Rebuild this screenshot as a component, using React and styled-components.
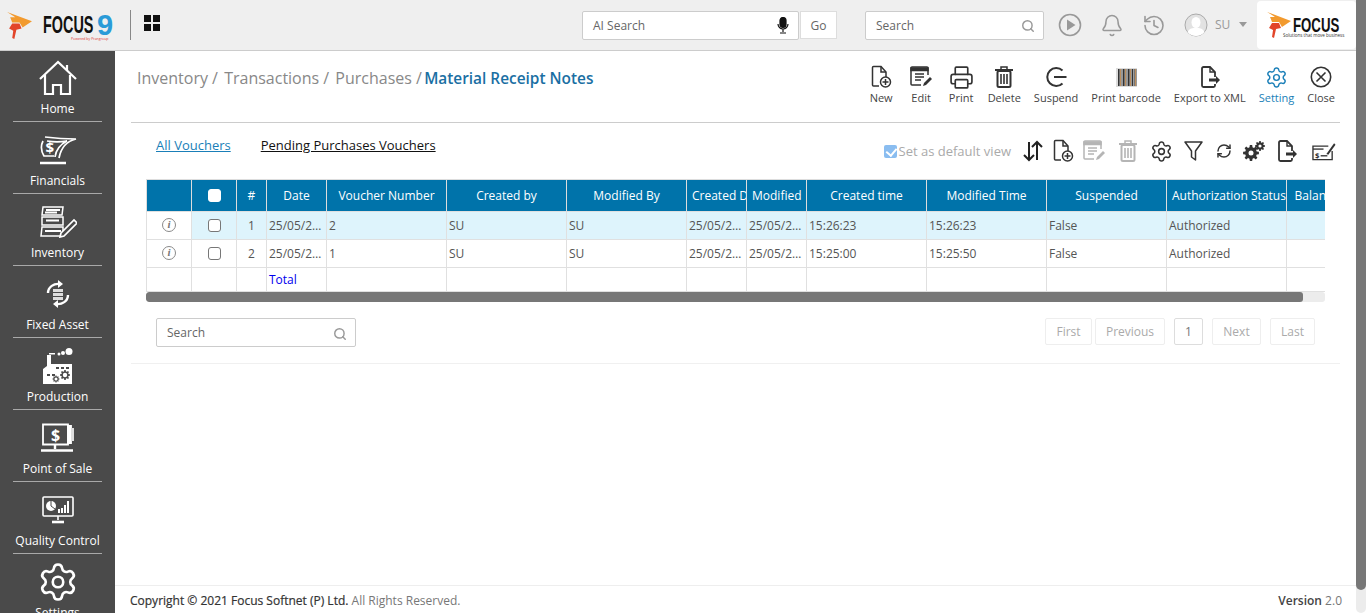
import React from 'react';
import styled, { createGlobalStyle } from 'styled-components';
import { Bell, History, Printer, RefreshCw, Search, Settings } from 'lucide-react';

const GlobalStyle = createGlobalStyle`
  html, body {
    margin: 0;
    height: 100%;
    overflow: hidden;
    background: #fff;
  }
  body {
    font-family: "Open Sans", "Liberation Sans", sans-serif;
    color: #555;
  }
  * {
    box-sizing: border-box;
  }
`;

const Page = styled.div`
  display: flex;
  width: 1366px;
  height: 613px;
  overflow: hidden;
`;

const Main = styled.div`
  display: flex;
  flex-direction: column;
  width: 1356px;
`;

const PageScroll = styled.div`
  width: 10px;
  background: #ececec;
  border-radius: 0 0 5px 5px;
  overflow: hidden;
`;

const PageThumb = styled.div`
  height: 590px;
  background: #777;
  border-radius: 0 0 5px 5px;
`;

/* top bar */

const TopBar = styled.header`
  display: flex;
  align-items: center;
  height: 51px;
  flex: none;
  background: #efefef;
  border-bottom: 1px solid #ccc;
`;

const BrandLogo = styled.div`
  position: relative;
  display: flex;
  align-items: center;
  width: 131px;
  height: 30px;
  padding-left: 7px;
  border-right: 1px solid #888;
`;

const LogoWord = styled.span`
  display: inline-block;
  width: ${p => p.$width}px;
  margin-left: ${p => p.$left}px;
  margin-top: ${p => p.$top || 0}px;
  font-family: "Liberation Sans", sans-serif;
  font-weight: 700;
  font-size: ${p => p.$size}px;
  line-height: 1;
  color: #111;
  transform: scaleX(${p => p.$scale});
  transform-origin: left center;
  white-space: nowrap;
`;

const LogoNine = styled.span`
  font-family: "Liberation Sans", sans-serif;
  font-weight: 700;
  font-size: 29px;
  line-height: 1;
  color: #2a9bd8;
  margin-left: 1px;
`;

const PoweredBy = styled.span`
  position: absolute;
  left: 71px;
  top: 26px;
  font-size: 3.5px;
  color: #d33;
  white-space: nowrap;
`;

const GridMark = styled.div`
  display: grid;
  grid-template-columns: 7px 7px;
  grid-template-rows: 7px 7px;
  gap: 2px;
  margin-left: 13px;
  margin-top: -5px;
  span {
    background: #111;
  }
`;

const TopSearchArea = styled.div`
  display: flex;
  align-items: center;
  margin-left: 422px;
`;

const AiBox = styled.div`
  display: flex;
  align-items: center;
  justify-content: space-between;
  width: 217px;
  height: 29px;
  padding: 0 9px 0 10px;
  background: #fff;
  border: 1px solid #ccc;
  border-radius: 2px;
  font-size: 12px;
  color: #666;
`;

const GoButton = styled.div`
  display: flex;
  align-items: center;
  justify-content: center;
  width: 37px;
  height: 28px;
  margin-left: 1px;
  background: #fff;
  border: 1px solid #ddd;
  font-size: 12px;
  color: #666;
`;

const SearchBox = styled.div`
  display: flex;
  align-items: center;
  justify-content: space-between;
  width: ${p => p.$width}px;
  height: 29px;
  margin-left: ${p => p.$left || 0}px;
  padding: 0 8px 0 10px;
  background: #fff;
  border: 1px solid #ccc;
  border-radius: 2px;
  font-size: 12px;
  color: #666;
  svg {
    color: #999;
    margin-top: 2px;
  }
`;

const TopIcons = styled.div`
  display: flex;
  align-items: center;
  width: 213px;
  padding-left: 14px;
  color: #999;
`;

const TopIconSlot = styled.span`
  display: flex;
  justify-content: center;
  width: 24px;
  margin-right: 18px;
`;

const UserName = styled.span`
  font-size: 12px;
  color: #999;
  margin-left: -11px;
  margin-right: 9px;
  margin-top: -2px;
`;

const Caret = styled.span`
  width: 0;
  height: 0;
  margin-top: -2px;
  border-left: 4px solid transparent;
  border-right: 4px solid transparent;
  border-top: 5px solid #999;
`;

const CornerLogo = styled.div`
  position: relative;
  display: flex;
  width: 99px;
  height: 48px;
  padding: 11px 0 0 10px;
  background: #fff;
  border-radius: 4px;
`;

const CornerTag = styled.span`
  position: absolute;
  left: 26px;
  top: 31px;
  font-size: 4.5px;
  color: #333;
  white-space: nowrap;
`;

/* sidebar */

const Body = styled.div`
  display: flex;
  flex: 1;
  min-height: 0;
`;

const Sidebar = styled.nav`
  width: 115px;
  flex: none;
  overflow: hidden;
  background: #4a4a4a;
`;

const NavItem = styled.div`
  display: flex;
  flex-direction: column;
  align-items: center;
  height: 72px;
  margin: 0 13px;
  border-bottom: 1px solid #a9a9a9;
  color: #fff;
  &:first-child {
    margin-top: -1px;
  }
  &:last-child {
    border-bottom: 0;
  }
`;

const NavIcon = styled.div`
  display: flex;
  align-items: center;
  justify-content: center;
  height: 51px;
  padding-top: 4px;
  width: 100%;
`;

const NavLabel = styled.span`
  font-size: 12px;
  line-height: 16px;
  white-space: nowrap;
`;

/* content */

const Content = styled.main`
  display: flex;
  flex-direction: column;
  flex: 1;
  min-width: 0;
`;

const Workspace = styled.div`
  flex: 1;
  padding: 0 16px;
`;

const HeadRow = styled.div`
  display: flex;
  justify-content: space-between;
  height: 72px;
  border-bottom: 1px solid #ccc;
`;

const Breadcrumb = styled.div`
  padding: 16px 0 0 6px;
  font-size: 16px;
  line-height: 22px;
  color: #888;
  white-space: nowrap;
  b {
    margin-left: -2px;
    font-weight: 600;
    font-size: 15.4px;
    color: #1a6fa3;
  }
`;

const Crumb = styled.span`
  margin-right: 2px;
`;

const ActionBar = styled.div`
  display: flex;
  padding: 13px 5px 0 0;
`;

const Action = styled.div`
  display: flex;
  flex-direction: column;
  align-items: center;
  min-width: 27px;
  margin-left: 13px;
  font-size: 11px;
  line-height: 15px;
  white-space: nowrap;
  color: ${p => (p.$active ? '#1a7fb8' : '#444')};
`;

const ActionIcon = styled.div`
  display: flex;
  align-items: center;
  justify-content: center;
  height: 26px;
`;

const ViewRow = styled.div`
  display: flex;
  justify-content: space-between;
  height: 56px;
`;

const Tabs = styled.div`
  display: flex;
  gap: 30px;
  padding: 13px 0 0 25px;
  font-size: 13px;
  line-height: 18px;
`;

const TabLink = styled.a`
  height: 18px;
  text-decoration: underline;
  color: ${p => (p.$active ? '#111' : '#1a7fb8')};
`;

const ViewTools = styled.div`
  display: flex;
  align-items: center;
  height: 30px;
  margin-top: 13px;
  padding-right: 4px;
`;

const DefaultCheck = styled.label`
  display: flex;
  align-items: center;
  margin-right: 10px;
  font-size: 13px;
  color: #aaa;
`;

const SoftCheck = styled.input.attrs({ type: 'checkbox' })`
  position: relative;
  appearance: none;
  width: 13px;
  height: 13px;
  margin: 0 2px 0 0;
  background: #8abdf0;
  border-radius: 2px;
  &::after {
    content: "";
    position: absolute;
    left: 4px;
    top: 1px;
    width: 5px;
    height: 8px;
    border: solid #fff;
    border-width: 0 2px 2px 0;
    transform: rotate(40deg);
  }
`;

const ToolIcon = styled.span`
  display: flex;
  justify-content: center;
  width: 24px;
  margin-left: ${p => p.$gap ?? 8}px;
  color: #333;
`;

const TableFrame = styled.div`
  width: 1179px;
  margin-left: 15px;
  overflow: hidden;
`;

const Grid = styled.table`
  width: 1500px;
  table-layout: fixed;
  border-collapse: collapse;
  font-size: 12px;
`;

const HeadCell = styled.th`
  height: 32px;
  padding: 0 5px;
  background: #0073aa;
  border: 1px solid #ddd;
  border-bottom: 0;
  font-weight: 400;
  font-size: 12px;
  color: #fff;
  white-space: nowrap;
  overflow: hidden;
  text-align: center;
`;

const Row = styled.tr`
  height: ${p => p.$height || 28}px;
`;

const Cell = styled.td`
  padding: 0 2px;
  background: ${p => (p.$on ? '#def4fc' : '#fff')};
  border: 1px solid #e0e0e0;
  color: #555;
  white-space: nowrap;
  overflow: hidden;
  text-overflow: ellipsis;
  text-align: ${p => (p.$center ? 'center' : 'left')};
`;

const TotalLabel = styled.span`
  color: #0000ee;
`;

const InfoMark = styled.span`
  display: inline-flex;
  align-items: center;
  justify-content: center;
  width: 14px;
  height: 14px;
  margin-top: -4px;
  border: 1.5px solid #8a8a8a;
  border-radius: 50%;
  font-family: "Liberation Serif", serif;
  font-style: italic;
  font-weight: 700;
  font-size: 11px;
  line-height: 1;
  color: #777;
  vertical-align: middle;
`;

const RowCheck = styled.input.attrs({ type: 'checkbox' })`
  display: block;
  appearance: none;
  width: 13px;
  height: 13px;
  margin: 0 auto;
  background: #fff;
  border: 1px solid ${p => (p.$head ? '#fff' : '#777')};
  border-radius: 3px;
`;

const HScroll = styled.div`
  width: 1179px;
  height: 10px;
  margin-left: 15px;
  background: #ececec;
  border-radius: 3px;
  overflow: hidden;
`;

const HThumb = styled.div`
  width: 1157px;
  height: 100%;
  background: #777;
  border-radius: 3px;
`;

const PagerRow = styled.div`
  display: flex;
  justify-content: space-between;
  height: 62px;
  padding: 16px 25px 0;
  border-bottom: 1px solid #f0f0f0;
`;

const Pager = styled.div`
  display: flex;
  height: 27px;
`;

const PageButton = styled.span`
  display: flex;
  align-items: center;
  justify-content: center;
  width: ${p => p.$width}px;
  margin-left: ${p => p.$gap}px;
  border: 1px solid ${p => (p.$current ? '#ddd' : '#eee')};
  border-radius: 2px;
  font-size: 12px;
  color: ${p => (p.$current ? '#777' : '#aaa')};
`;

const Footer = styled.footer`
  display: flex;
  justify-content: space-between;
  align-items: center;
  height: 28px;
  flex: none;
  padding: 1px 14px 0 15px;
  border-top: 1px solid #eee;
  font-size: 12px;
  color: #777;
  b {
    font-weight: 400;
    color: #333;
    -webkit-text-stroke: 0.2px #333;
  }
`;

const VersionLabel = styled.strong`
  font-weight: 600;
  color: #444;
`;

/* icons */

const gearPath = (cx, cy, r, teeth) => {
  const pts = [];
  const step = (Math.PI * 2) / teeth;
  for (let i = 0; i < teeth; i++) {
    const a = i * step;
    [[-0.3, 0.74], [-0.17, 1], [0.17, 1], [0.3, 0.74]].forEach(([o, k]) => {
      const t = a + o * step * 1.1;
      pts.push(`${(cx + Math.cos(t) * r * k).toFixed(2)},${(cy + Math.sin(t) * r * k).toFixed(2)}`);
    });
  }
  return `M${pts.join('L')}Z`;
};

const FlameMark = ({ size = 25 }) => (
  <svg width={size} height={size * 1.08} viewBox="0 0 24 26">
    <path d="M0 0 L24 9 L15 15 L12 10 L5 10 L3 5 L8 5 Z" fill="#f29a2e" />
    <path d="M5 11 L12 11 L14 16 L9 17 L7 26 L5 25 L6 18 L2 16 Z" fill="#e2452a" />
  </svg>
);

const DocPlus = ({ color = '#333' }) => (
  <svg width="22" height="24" viewBox="0 0 22 24" fill="none" stroke={color} strokeWidth="1.5">
    <path d="M9 21H3.5a1 1 0 0 1-1-1V2.5a1 1 0 0 1 1-1H11l5 5.5v5" />
    <path d="M11 1.5V7h5" />
    <circle cx="15.5" cy="17" r="5" />
    <path d="M15.5 14v6M12.5 17h6" />
  </svg>
);

const EditDoc = ({ color = '#333' }) => (
  <svg width="24" height="24" viewBox="0 0 24 24" fill="none" stroke={color} strokeWidth="1.5">
    <path d="M19 10V3a1 1 0 0 0-1-1H3a1 1 0 0 0-1 1v16a1 1 0 0 0 1 1h9" />
    <path d="M2 3h17v2.5H2z" fill={color} />
    <path d="M6 9h9M6 12h9M6 15h6" />
    <path d="M14 21l1-3 6-6 2 2-6 6z" fill={color} stroke="none" />
  </svg>
);

const TrashBin = ({ color = '#333' }) => (
  <svg width="20" height="24" viewBox="0 0 20 24" fill="none" stroke={color}>
    <path d="M1 5h18" strokeWidth="2" />
    <path d="M7 5V2h6v3" strokeWidth="1.5" />
    <rect x="3.5" y="6" width="13" height="16" rx="1.5" strokeWidth="2" />
    <path d="M7 9v10M10 9v10M13 9v10" strokeWidth="1.6" />
  </svg>
);

const SuspendIcon = () => (
  <svg width="22" height="22" viewBox="0 0 22 22" fill="none" stroke="#333" strokeWidth="2">
    <path d="M17.500 4.500A9 9 0 1 0 17.500 17.500" />
    <path d="M9 11h12.500" />
  </svg>
);

const BARS = [2, 1, 1, 2, 1, 1, 2, 1, 2, 1, 1, 2];

const BarcodeIcon = () => {
  let x = 2;
  return (
    <svg width="21" height="19" viewBox="0 0 21 19">
      <rect width="21" height="19" fill="#dcdcdc" />
      {BARS.map((w, i) => {
        const bar = <rect key={i} x={x} y="1" width={w * 0.8} height="17" fill={i % 3 === 1 ? '#b57b3c' : '#333'} />;
        x += w * 0.8 + 0.6;
        return bar;
      })}
    </svg>
  );
};

const ExportDoc = () => (
  <svg width="22" height="24" viewBox="0 0 22 24" fill="none" stroke="#333" strokeWidth="1.8">
    <path d="M16 12V7l-5-5H4.500a1.500 1.500 0 0 0-1.500 1.500v17A1.500 1.500 0 0 0 4.500 22h10a1.500 1.500 0 0 0 1.500-1.500V19" />
    <path d="M11 2v5h5" strokeWidth="1.4" />
    <path d="M10 13.500h7V11l4 4-4 4v-2.500h-7z" fill="#333" stroke="none" />
  </svg>
);

const CloseRound = () => (
  <svg width="22" height="22" viewBox="0 0 22 22" fill="none" stroke="#333" strokeWidth="1.6">
    <circle cx="11" cy="11" r="9.700" />
    <path d="M6.500 6.500l9 9M15.500 6.500l-9 9" />
  </svg>
);

const SortArrows = () => (
  <svg width="20" height="22" viewBox="0 0 20 22" fill="none" stroke="#222" strokeWidth="2">
    <path d="M6 2v18M1 15l5 5 5-5" />
    <path d="M14 20V2M9 7l5-5 5 5" />
  </svg>
);

const FunnelIcon = () => (
  <svg width="19" height="20" viewBox="0 0 19 20" fill="none" stroke="#333" strokeWidth="1.5" strokeLinejoin="round">
    <path d="M1 1h17l-6.500 9v9l-4-3v-6z" />
  </svg>
);

const TwoGears = () => (
  <svg width="22" height="20" viewBox="0 0 22 20">
    <path d={gearPath(8, 12, 8, 8)} fill="#333" />
    <circle cx="8" cy="12" r="2.500" fill="#fff" />
    <path d={gearPath(17, 5, 5, 8)} fill="#333" />
    <circle cx="17" cy="5" r="1.600" fill="#fff" />
  </svg>
);

const ChequeIcon = () => (
  <svg width="25" height="20" viewBox="0 0 25 20" fill="none" stroke="#333" strokeWidth="1.4">
    <path d="M17 5H1v14h20v-9" />
    <path d="M1 8h11" />
    <text x="3" y="17" fontSize="8" fontWeight="700" fill="#333" stroke="none">$</text>
    <path d="M9 15h7" />
    <path d="M15 13L23 2l1.500 1.500L17 14z" fill="#333" stroke="none" />
  </svg>
);

const PlayRound = () => (
  <svg width="24" height="24" viewBox="0 0 24 24" fill="none">
    <circle cx="12" cy="12" r="10.500" stroke="#999" strokeWidth="1.6" />
    <path d="M9 6.500l8.500 5.500L9 17.500z" fill="#999" />
  </svg>
);

const Avatar = () => (
  <svg width="24" height="24" viewBox="0 0 24 24">
    <circle cx="12" cy="12" r="11" fill="#e2e2e2" stroke="#aaa" />
    <ellipse cx="12" cy="9.500" rx="4.500" ry="5.500" fill="#fff" />
    <path d="M3.500 19c2-4 5-4 8.500-4s6.500 0 8.500 4a11 11 0 0 1-17 0z" fill="#fff" />
  </svg>
);

const MicIcon = () => (
  <svg width="12" height="17" viewBox="0 0 12 17" fill="none" stroke="#111" strokeWidth="1.2">
    <rect x="3" y="0.500" width="6" height="10" rx="3" fill="#111" />
    <path d="M1 7a5 5 0 0 0 10 0M6 12v3M3 16h6" />
  </svg>
);

const HomeGlyph = () => (
  <svg width="38" height="36" viewBox="0 0 38 36" fill="none" stroke="#fff" strokeWidth="2.200">
    <path d="M1 19L19 2l18 17" />
    <path d="M28 10V5" />
    <path d="M6 15v19h8v-9h8v9h9V15" />
  </svg>
);

const FinancialsGlyph = () => (
  <svg width="38" height="30" viewBox="0 0 38 30" fill="none" stroke="#fff" strokeWidth="1.700">
    <path d="M6 2c8 1 20 2 31 2-9 2-15 9-17 19" />
    <path d="M8 6c6 1 14 1 20 0-6 3-11 9-12 16" />
    <path d="M4 6C2 10 2 16 5 21h10" />
    <text x="6.500" y="18" fontSize="15" fontWeight="700" fill="#fff" stroke="none" fontFamily="Open Sans">$</text>
    <path d="M1 28h26" strokeWidth="2.500" />
  </svg>
);

const InventoryGlyph = () => (
  <svg width="38" height="32" viewBox="0 0 38 32" fill="none" stroke="#fff" strokeWidth="1.500">
    <path d="M4 1h20l-1 8H3zM3 11h21v8H3zM3 21h21v9H2z" />
    <path d="M7 4h14M6 6.500h12M7 14.500h13M6 25h16" strokeWidth="1.800" />
    <path d="M22 27l13-13 3 3-13 13-4 1z" fill="#4a4a4a" strokeWidth="1.700" />
  </svg>
);

const FixedAssetGlyph = () => (
  <svg width="24" height="28" viewBox="0 0 24 28" fill="none" stroke="#fff" strokeWidth="2.400">
    <path d="M2 13C2 7 8 3 14 4" />
    <path d="M12 0l5 4-5 4z" fill="#fff" stroke="none" />
    <path d="M22 15c0 6-6 10-12 9" />
    <path d="M12 28l-5-4 5-4z" fill="#fff" stroke="none" />
    <path d="M7 9h10v3H7zM7 13h10v3H7zM7 17h10v3H7z" fill="#ddd" stroke="none" />
  </svg>
);

const ProductionGlyph = () => (
  <svg width="31" height="36" viewBox="0 0 31 36">
    <circle cx="27" cy="3.500" r="3.500" fill="#fff" />
    <circle cx="21" cy="5" r="2" fill="#fff" />
    <circle cx="17" cy="6" r="1.500" fill="#fff" />
    <path d="M7 5h6v1.500H7z" fill="#fff" />
    <path d="M5 7h4v9h2l19 0v20H1V21l4-3z" fill="#fff" />
    <path d="M14 19h3v2h-3zM19 19h3v2h-3zM24 19h3v2h-3zM5 26h3v2H5zM10 26h3v2h-3z" fill="#4a4a4a" />
    <path d={gearPath(23, 27, 5, 8)} fill="#4a4a4a" />
    <circle cx="23" cy="27" r="2.200" fill="#fff" />
    <path d={gearPath(14, 31, 3.500, 8)} fill="#4a4a4a" />
    <circle cx="14" cy="31" r="1.500" fill="#fff" />
  </svg>
);

const PosGlyph = () => (
  <svg width="36" height="30" viewBox="0 0 36 30" fill="none" stroke="#fff" strokeWidth="1.800">
    <path d="M3 1.500h25v20H3z" />
    <path d="M28 3h3v17h-3z" fill="#fff" />
    <path d="M31 5h3v13h-3z" fill="#ddd" stroke="none" />
    <text x="11" y="18" fontSize="16" fontWeight="700" fill="#fff" stroke="none" fontFamily="Open Sans">$</text>
    <path d="M15 22v4M1 27.500h32" strokeWidth="2.400" />
  </svg>
);

const QualityGlyph = () => (
  <svg width="32" height="28" viewBox="0 0 32 28" fill="none" stroke="#fff" strokeWidth="1.600">
    <rect x="1" y="1" width="30" height="19" rx="1" />
    <circle cx="9" cy="10" r="5" fill="#fff" stroke="none" />
    <path d="M9 10V5M9 10l4 3" stroke="#4a4a4a" strokeWidth="1" />
    <path d="M17 17v-4M20 17v-5M23 17V9M26 17V5" strokeWidth="2" />
    <path d="M16 20v4" />
    <path d="M10 26h12" strokeWidth="2.600" />
  </svg>
);

const NAV = [
  { label: 'Home', icon: <HomeGlyph /> },
  { label: 'Financials', icon: <FinancialsGlyph /> },
  { label: 'Inventory', icon: <InventoryGlyph /> },
  { label: 'Fixed Asset', icon: <FixedAssetGlyph /> },
  { label: 'Production', icon: <ProductionGlyph /> },
  { label: 'Point of Sale', icon: <PosGlyph /> },
  { label: 'Quality Control', icon: <QualityGlyph /> },
  { label: 'Settings', icon: <Settings size={42} strokeWidth={1.5} /> }
];

const ACTIONS = [
  { label: 'New', icon: <DocPlus /> },
  { label: 'Edit', icon: <EditDoc /> },
  { label: 'Print', icon: <Printer size={25} strokeWidth={1.6} color="#333" /> },
  { label: 'Delete', icon: <TrashBin /> },
  { label: 'Suspend', icon: <SuspendIcon /> },
  { label: 'Print barcode', icon: <BarcodeIcon /> },
  { label: 'Export to XML', icon: <ExportDoc /> },
  { label: 'Setting', icon: <Settings size={23} strokeWidth={1.5} />, active: true },
  { label: 'Close', icon: <CloseRound /> }
];

const COLUMNS = [
  ['', 45], ['', 45], ['#', 30], ['Date', 60], ['Voucher Number', 120], ['Created by', 120],
  ['Modified By', 120], ['Created Date', 60], ['Modified', 60], ['Created time', 120],
  ['Modified Time', 120], ['Suspended', 120], ['Authorization Status', 120], ['Balance', 60],
  ['', 300]
];

const ROWS = [
  { no: 1, voucher: '2', modified: '15:26:23', created: '15:26:23', on: true },
  { no: 2, voucher: '1', modified: '15:25:50', created: '15:25:00', on: false }
];

const BlankCells = ({ count, on }) => Array.from({ length: count }, (_, i) => <Cell key={i} $on={on} />);

const App = () => (
  <Page>
    <GlobalStyle />
    <Main>
      <TopBar>
        <BrandLogo>
          <FlameMark />
          <LogoWord $size={24} $scale={0.6} $width={53} $left={11}>FOCUS</LogoWord>
          <LogoNine>9</LogoNine>
          <PoweredBy>Powered by Prangroup</PoweredBy>
        </BrandLogo>
        <GridMark><span /><span /><span /><span /></GridMark>
        <TopSearchArea>
          <AiBox>AI Search <MicIcon /></AiBox>
          <GoButton>Go</GoButton>
          <SearchBox $width={179} $left={28}>Search <Search size={14} strokeWidth={2.5} /></SearchBox>
        </TopSearchArea>
        <TopIcons>
          <TopIconSlot><PlayRound /></TopIconSlot>
          <TopIconSlot><Bell size={25} strokeWidth={1.5} /></TopIconSlot>
          <TopIconSlot><History size={25} strokeWidth={1.6} /></TopIconSlot>
          <TopIconSlot><Avatar /></TopIconSlot>
          <UserName>SU</UserName>
          <Caret />
        </TopIcons>
        <CornerLogo>
          <FlameMark size={24} />
          <LogoWord $size={21} $scale={0.63} $width={46} $left={2} $top={2}>FOCUS</LogoWord>
          <CornerTag>Solutions that move business</CornerTag>
        </CornerLogo>
      </TopBar>
      <Body>
        <Sidebar>
          {NAV.map(item => (
            <NavItem key={item.label}>
              <NavIcon>{item.icon}</NavIcon>
              <NavLabel>{item.label}</NavLabel>
            </NavItem>
          ))}
        </Sidebar>
        <Content>
          <Workspace>
            <HeadRow>
              <Breadcrumb>
                <Crumb>Inventory / </Crumb>
                <Crumb>Transactions / </Crumb>
                Purchases / <b>Material Receipt Notes</b>
              </Breadcrumb>
              <ActionBar>
                {ACTIONS.map(action => (
                  <Action key={action.label} $active={action.active}>
                    <ActionIcon>{action.icon}</ActionIcon>
                    {action.label}
                  </Action>
                ))}
              </ActionBar>
            </HeadRow>
            <ViewRow>
              <Tabs>
                <TabLink>All Vouchers</TabLink>
                <TabLink $active>Pending Purchases Vouchers</TabLink>
              </Tabs>
              <ViewTools>
                <DefaultCheck><SoftCheck checked readOnly />Set as default view</DefaultCheck>
                <ToolIcon $gap={0}><SortArrows /></ToolIcon>
                <ToolIcon $gap={6}><DocPlus /></ToolIcon>
                <ToolIcon $gap={7}><EditDoc color="#b5b5b5" /></ToolIcon>
                <ToolIcon $gap={10}><TrashBin color="#b5b5b5" /></ToolIcon>
                <ToolIcon $gap={9}><Settings size={23} strokeWidth={1.6} /></ToolIcon>
                <ToolIcon $gap={8}><FunnelIcon /></ToolIcon>
                <ToolIcon $gap={7}><RefreshCw size={16} strokeWidth={2.2} /></ToolIcon>
                <ToolIcon $gap={6}><TwoGears /></ToolIcon>
                <ToolIcon $gap={9}><ExportDoc /></ToolIcon>
                <ToolIcon $gap={13}><ChequeIcon /></ToolIcon>
              </ViewTools>
            </ViewRow>
            <TableFrame>
              <Grid>
                <colgroup>
                  {COLUMNS.map(([name, width], i) => <col key={i} style={{ width }} />)}
                </colgroup>
                <thead>
                  <tr>
                    {COLUMNS.map(([name], i) => (
                      <HeadCell key={i}>{i === 1 ? <RowCheck $head readOnly /> : name}</HeadCell>
                    ))}
                  </tr>
                </thead>
                <tbody>
                  {ROWS.map(row => (
                    <Row key={row.no}>
                      <Cell $center><InfoMark>i</InfoMark></Cell>
                      <Cell $on={row.on}><RowCheck readOnly /></Cell>
                      <Cell $on={row.on} $center>{row.no}</Cell>
                      <Cell $on={row.on}>25/05/2021</Cell>
                      <Cell $on={row.on}>{row.voucher}</Cell>
                      <Cell $on={row.on}>SU</Cell>
                      <Cell $on={row.on}>SU</Cell>
                      <Cell $on={row.on}>25/05/2021</Cell>
                      <Cell $on={row.on}>25/05/2021</Cell>
                      <Cell $on={row.on}>{row.created}</Cell>
                      <Cell $on={row.on}>{row.modified}</Cell>
                      <Cell $on={row.on}>False</Cell>
                      <Cell $on={row.on}>Authorized</Cell>
                      <BlankCells count={2} on={row.on} />
                    </Row>
                  ))}
                  <Row $height={24}>
                    <BlankCells count={3} />
                    <Cell><TotalLabel>Total</TotalLabel></Cell>
                    <BlankCells count={11} />
                  </Row>
                </tbody>
              </Grid>
            </TableFrame>
            <HScroll><HThumb /></HScroll>
            <PagerRow>
              <SearchBox $width={200}>Search <Search size={14} strokeWidth={2.5} /></SearchBox>
              <Pager>
                <PageButton $width={47} $gap={0}>First</PageButton>
                <PageButton $width={70} $gap={3}>Previous</PageButton>
                <PageButton $width={29} $gap={9} $current>1</PageButton>
                <PageButton $width={49} $gap={9}>Next</PageButton>
                <PageButton $width={45} $gap={9}>Last</PageButton>
              </Pager>
            </PagerRow>
          </Workspace>
          <Footer>
            <span><b>Copyright © 2021 Focus Softnet (P) Ltd.</b> All Rights Reserved.</span>
            <span><VersionLabel>Version</VersionLabel> 2.0</span>
          </Footer>
        </Content>
      </Body>
    </Main>
    <PageScroll><PageThumb /></PageScroll>
  </Page>
);

export default App;
